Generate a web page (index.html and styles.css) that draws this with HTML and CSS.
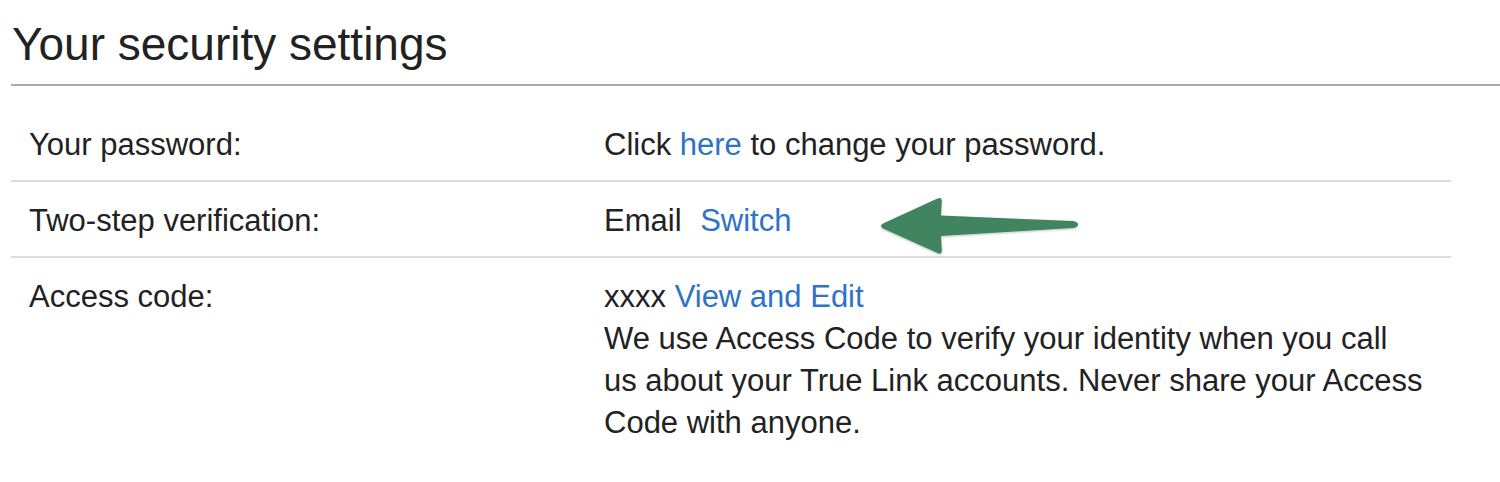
FILE: index.html
```html
<!DOCTYPE html>
<html lang="en">
<head>
<meta charset="utf-8">
<title>Your security settings</title>
<link rel="stylesheet" href="styles.css">
</head>
<body>
<div class="page">
  <h1 class="title">Your security settings</h1>
  <div class="settings">
    <div class="row">
      <div class="label">Your password:</div>
      <div class="value">Click <a href="#" class="link">here</a> to change your password.</div>
    </div>
    <div class="row">
      <div class="label">Two-step verification:</div>
      <div class="value">Email <a href="#" class="link switch">Switch</a></div>
    </div>
    <div class="row">
      <div class="label">Access code:</div>
      <div class="value">xxxx <a href="#" class="link">View and Edit</a><br>We use Access Code to verify your identity when you call us about your True Link accounts. Never share your Access Code with anyone.</div>
    </div>
  </div>
  <svg class="arrow" width="220" height="80" viewBox="860 185 220 80" aria-hidden="true">
    <defs>
      <filter id="sh" x="-10%" y="-20%" width="120%" height="140%">
        <feDropShadow dx="0" dy="1" stdDeviation="1.2" flood-color="#000" flood-opacity="0.25"/>
      </filter>
    </defs>
    <path filter="url(#sh)" fill="#3f855e" d="M883 223.5 L937.5 198.5 Q942 196.5 941.8 201 L941 215.5 L1073 221 Q1078 222 1078 224.5 Q1078 227 1073 228 L941 236 L941.8 250 Q942 255 937.5 253 L883 228.5 Q879 226 883 223.5 Z"/>
  </svg>
</div>
</body>
</html>
```

FILE: styles.css
```css
html, body {
  margin: 0;
  padding: 0;
  background: #ffffff;
}

body {
  font-family: "Liberation Sans", Arial, sans-serif;
  color: #222222;
}

.page {
  position: relative;
  padding: 16px 0 0 11px;
}

.title {
  margin: 0;
  font-size: 46px;
  font-weight: 400;
  line-height: 56px;
  padding: 0 0 12px 1px;
  border-bottom: 2px solid #aaaaaa;
  color: #222222;
}

.settings {
  width: 1440px;
  margin-top: 20px;
}

.row {
  display: grid;
  grid-template-columns: 593px 824px;
  padding: 18px 0 14px;
  border-bottom: 2px solid #dddddd;
  font-size: 31px;
  line-height: 42px;
}

.row:last-child {
  border-bottom: none;
}

.label {
  padding-left: 18px;
}

.link {
  color: #2d73c6;
  text-decoration: none;
}

.switch {
  margin-left: 10px;
}

.arrow {
  position: absolute;
  left: 860px;
  top: 185px;
}
```
